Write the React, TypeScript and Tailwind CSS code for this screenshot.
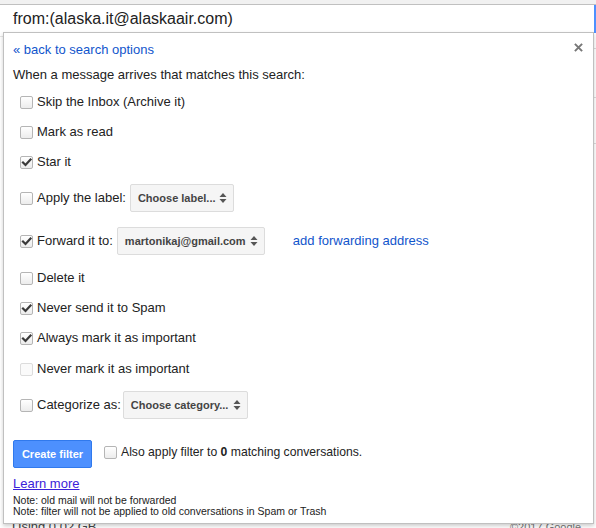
import React from "react";

function Box({ checked = false, disabled = false }: { checked?: boolean; disabled?: boolean }) {
  return (
    <span
      className={
        "relative inline-block w-[13px] h-[13px] shrink-0 rounded-[2px] border " +
        (disabled
          ? "border-[#dcdcdc] bg-[#fafafa]"
          : "border-[#b5b5b5] bg-gradient-to-b from-[#ffffff] to-[#ececec]")
      }
    >
      {checked && (
        <svg viewBox="0 0 13 13" className="absolute left-[-1px] top-[-1px] w-[13px] h-[13px]">
          <path d="M3 6.5 L5.5 9 L10.5 3.5" fill="none" stroke="#3a3a3a" strokeWidth="2.2" strokeLinecap="square" />
        </svg>
      )}
    </span>
  );
}

function Arrows() {
  return (
    <svg viewBox="0 0 8 12" className="w-[8px] h-[12px] shrink-0">
      <path d="M0.5 5 L4 1 L7.5 5 Z" fill="#555" />
      <path d="M0.5 7 L4 11 L7.5 7 Z" fill="#555" />
    </svg>
  );
}

function Select({ text, w }: { text: string; w: string }) {
  return (
    <div
      className={
        "flex items-center justify-between h-[28px] rounded-[2px] border border-[#dcdcdc] bg-[#f5f5f5] pl-[7px] pr-[6px] text-[11px] font-bold text-[#444] " +
        w
      }
    >
      <span>{text}</span>
      <Arrows />
    </div>
  );
}

function Row({
  h,
  checked,
  disabled,
  label,
  children,
}: {
  h: string;
  checked?: boolean;
  disabled?: boolean;
  label: string;
  children?: React.ReactNode;
}) {
  return (
    <div className={"flex items-center pl-[16px] " + h}>
      <Box checked={checked} disabled={disabled} />
      <span className="ml-[4px] text-[13px] text-[#222] leading-[16px]">{label}</span>
      {children}
    </div>
  );
}

export default function App() {
  return (
    <div
      className="relative w-[596px] h-[528px] overflow-hidden bg-white"
      style={{ fontFamily: '"Liberation Sans", Arial, sans-serif' }}
    >
      {/* background page */}
      <div className="h-[4px] bg-[#f1f1f1]" />
      <div className="flex h-[29px] border-t border-[#c0c0c0]">
        <div className="flex-1 flex items-center pl-[13px] text-[16px] text-[#222] bg-white">
          from:(alaska.it@alaskaair.com)
        </div>
        <div className="w-[2px] bg-[#4d90fe]" />
      </div>
      <div className="absolute right-0 top-[48px] w-[3px] h-px bg-[#dcdcdc]" />
      <div className="absolute right-0 top-[97px] w-[3px] h-px bg-[#dcdcdc]" />
      <div className="absolute right-0 top-[143px] w-[3px] h-px bg-[#dcdcdc]" />
      <div className="absolute left-0 top-[36px] w-[3px] h-px bg-[#e5e5e5]" />
      <div className="absolute left-[12px] top-[519px] text-[13px] text-[#444] leading-[16px]">
        Using 0.02 GB
      </div>
      <div className="absolute left-[510px] top-[519px] text-[11px] text-[#777] leading-[16px]">
        ©2017 Google - Terms
      </div>

      {/* popup */}
      <div className="absolute left-[3px] top-[32px] w-[591px] h-[492px] bg-white border border-[#c0c0c0] shadow-[0_2px_4px_rgba(0,0,0,0.2)]">
        <div className="relative flex flex-col pl-[9px] pt-[9px]">
          <svg viewBox="0 0 10 10" className="absolute left-[570px] top-[10px] w-[9px] h-[9px]">
            <path d="M1 1 L9 9 M9 1 L1 9" stroke="#777" strokeWidth="2.2" />
          </svg>
          <div className="h-[16px] text-[13px] leading-[16px] text-[#15c]">« back to search options</div>
          <div className="mt-[9px] h-[16px] text-[13px] leading-[16px] text-[#222]">
            When a message arrives that matches this search:
          </div>
        </div>
        <div className="mt-[4px] flex flex-col">
          <Row h="h-[30px]" label="Skip the Inbox (Archive it)" />
          <Row h="h-[30px]" label="Mark as read" />
          <Row h="h-[30px]" checked label="Star it" />
          <Row h="h-[42px]" label="Apply the label:">
            <div className="ml-[4px]">
              <Select text="Choose label..." w="w-[104px]" />
            </div>
          </Row>
          <Row h="h-[44px]" checked label="Forward it to:">
            <div className="ml-[4px]">
              <Select text="martonikaj@gmail.com" w="w-[148px]" />
            </div>
            <span className="ml-[28px] text-[13px] text-[#15c]">add forwarding address</span>
          </Row>
          <Row h="h-[30px]" label="Delete it" />
          <Row h="h-[30px]" checked label="Never send it to Spam" />
          <Row h="h-[30px]" checked label="Always mark it as important" />
          <Row h="h-[32px]" disabled label="Never mark it as important" />
          <Row h="h-[40px]" label="Categorize as:">
            <div className="ml-[2px]">
              <Select text="Choose category..." w="w-[125px]" />
            </div>
          </Row>
        </div>
        <div className="mt-[15px] pl-[9px] flex items-start">
          <button className="h-[28px] w-[79px] rounded-[2px] border border-[#3079ed] bg-[#4d90fe] text-white text-[11px] font-bold">
            Create filter
          </button>
          <div className="ml-[12px] mt-[4px] flex items-center">
            <Box />
            <span className="ml-[4px] text-[12.2px] leading-[16px] text-[#222]">
              Also apply filter to <b>0</b> matching conversations.
            </span>
          </div>
        </div>
        <div className="pl-[9px] mt-[8px] text-[13px] leading-[16px] text-[#3b22d9] underline">Learn more</div>
        <div className="pl-[9px] mt-[3px] text-[10.5px] leading-[11px] text-[#222]">
          <div>Note: old mail will not be forwarded</div>
          <div>Note: filter will not be applied to old conversations in Spam or Trash</div>
        </div>
      </div>
    </div>
  );
}
